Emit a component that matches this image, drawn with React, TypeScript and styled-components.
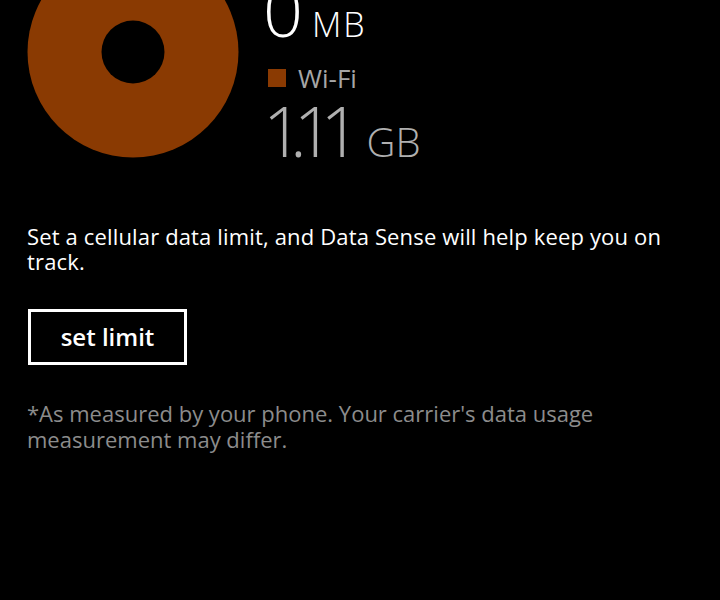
import React from "react";
import styled, { createGlobalStyle } from "styled-components";

const GlobalStyle = createGlobalStyle`
  html, body {
    margin: 0;
    padding: 0;
    background: #000;
  }
  body {
    font-family: "Open Sans", "Noto Sans", sans-serif;
    color: #fff;
    overflow: hidden;
  }
`;

const ACCENT = "#8a3a02";

const Page = styled.div`
  width: 720px;
  height: 600px;
  overflow: hidden;
  background: #000;
`;

// the view is scrolled, so the chart row starts above the top edge
const Content = styled.div`
  margin-top: -57px;
  padding: 0 24px 0 27px;
`;

const Hero = styled.div`
  display: flex;
  align-items: flex-start;
`;

const Donut = styled.svg`
  display: block;
  flex: none;
  margin: 3px 0 0 0;
`;

const Legend = styled.div`
  display: flex;
  flex-direction: column;
  margin-left: 27px;
`;

const LegendLabel = styled.div<{ $color: string }>`
  display: flex;
  align-items: center;
  gap: 12px;
  height: 30px;
  margin-bottom: 2px;
  font-size: 26px;
  line-height: 30px;
  color: #a6a6a6;

  &::before {
    content: "";
    width: 18px;
    height: 18px;
    margin-left: 2px;
    background: ${(p) => p.$color};
  }
`;

const Value = styled.div<{ $active?: boolean; $gap: number }>`
  display: flex;
  align-items: baseline;
  gap: ${(p) => p.$gap}px;
  height: 70px;
  margin-bottom: 18px;
  margin-left: -3px;
  color: ${(p) => (p.$active ? "#ffffff" : "#b0b0b0")};
`;

const Amount = styled.span<{ $tight?: boolean }>`
  font-size: 70px;
  line-height: 70px;
  font-weight: 300;
  letter-spacing: ${(p) => (p.$tight ? "-13px" : "-3px")};
`;

const Unit = styled.span<{ $size: number; $spread?: boolean }>`
  font-size: ${(p) => p.$size}px;
  line-height: 70px;
  font-weight: 300;
  letter-spacing: ${(p) => (p.$spread ? "2px" : "0")};
`;

const Message = styled.p`
  margin: 41px 0 0;
  max-width: 650px;
  font-size: 22px;
  line-height: 25px;
  letter-spacing: 0.15px;
`;

const LimitButton = styled.button`
  display: block;
  margin-top: 35px;
  margin-left: 1px;
  width: 159px;
  height: 56px;
  padding: 0;
  border: 3px solid #fff;
  background: transparent;
  color: #fff;
  font-family: "Open Sans", "Noto Sans", sans-serif;
  font-size: 24px;
  font-weight: 600;
  line-height: 48px;
`;

const Footnote = styled.p`
  margin: 35px 0 0;
  font-size: 22px;
  line-height: 26px;
  color: #8c8c8c;
`;

export default function App() {
  return (
    <Page>
      <GlobalStyle />
      <Content>
        <Hero>
          <Donut width="212" height="212" viewBox="0 0 212 212">
            <circle cx="106" cy="106" r="105.5" fill={ACCENT} />
            <circle cx="106" cy="106" r="31.5" fill="#000" />
          </Donut>
          <Legend>
            <LegendLabel $color="#6b6b6b">Cellular</LegendLabel>
            <Value $active $gap={12}>
              <Amount>0</Amount>
              <Unit $size={34} $spread>
                MB
              </Unit>
            </Value>
            <LegendLabel $color={ACCENT}>Wi-Fi</LegendLabel>
            <Value $gap={19}>
              <Amount $tight>1.11</Amount>
              <Unit $size={40}>GB</Unit>
            </Value>
          </Legend>
        </Hero>
        <Message>
          Set a cellular data limit, and Data Sense will help keep you on track.
        </Message>
        <LimitButton>set limit</LimitButton>
        <Footnote>
          *As measured by your phone. Your carrier's data usage measurement may
          differ.
        </Footnote>
      </Content>
    </Page>
  );
}
